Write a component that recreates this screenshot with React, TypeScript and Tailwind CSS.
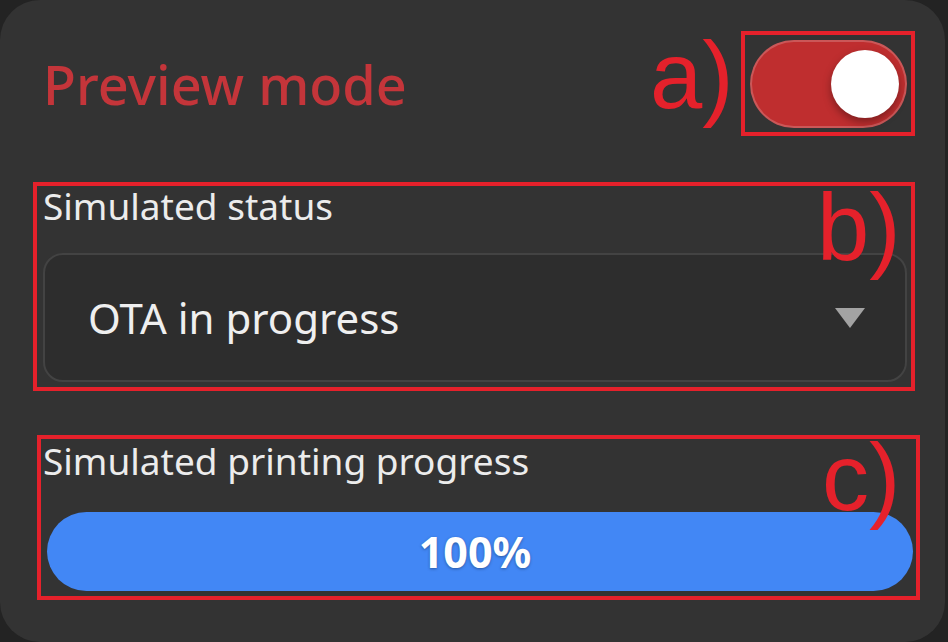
import React from 'react'

const annot = "absolute text-[94px] leading-none text-[#e5212b] font-['Liberation_Sans',Arial,sans-serif]"
const frame = 'absolute border-[4px] border-[#e5212b]'

export default function App() {
  return (
    <div className="w-[948px] h-[642px] bg-[#232323] font-['Noto_Sans',sans-serif]">
      <div className="relative mr-[3px] h-full rounded-[40px] bg-[#333333] pl-[43px] pr-[38px] pt-[40px]">
        {/* header */}
        <div className="flex items-center justify-between">
          <h1 className="text-[54px] leading-none font-medium text-[#c4353a]">Preview mode</h1>
          <div className="flex h-[88px] w-[157px] items-center justify-end rounded-full border-2 border-white/20 bg-[#bf2e2f] pr-[6px]">
            <div className="h-[68px] w-[68px] rounded-full bg-white shadow-[0_4px_8px_rgba(0,0,0,0.35)]" />
          </div>
        </div>

        {/* simulated status */}
        <div className="mt-[59px] text-[37px] leading-none text-[#ececec]">Simulated status</div>
        <div className="mt-[29px] flex h-[129px] items-center justify-between rounded-[20px] border-2 border-[#434343] bg-[#2d2d2d] pl-[43px] pr-[40px]">
          <span className="text-[42px] leading-none text-[#efefef]">OTA in progress</span>
          <svg width="30" height="20" viewBox="0 0 30 20">
            <polygon points="0,0 30,0 15,20" fill="#a3a3a3" />
          </svg>
        </div>

        {/* printing progress */}
        <div className="mt-[60px] text-[37px] leading-none text-[#ececec]">Simulated printing progress</div>
        <div className="ml-[4px] -mr-[6px] mt-[33px] flex h-[79px] items-center justify-center rounded-full bg-[#4287f5] pr-[10px]">
          <span className="text-[43px] leading-none font-bold text-white [text-shadow:0_1px_3px_rgba(0,0,0,0.35)]">100%</span>
        </div>

        {/* annotation overlays */}
        <div className={frame + ' left-[741px] top-[31px] h-[105px] w-[174px]'} />
        <div className={frame + ' left-[33px] top-[182px] h-[209px] w-[882px]'} />
        <div className={frame + ' left-[37px] top-[435px] h-[165px] w-[883px]'} />
        <div className={annot + ' left-[650px] top-[29px]'}>a)</div>
        <div className={annot + ' left-[817px] top-[181px]'}>b)</div>
        <div className={annot + ' left-[822px] top-[431px]'}>c)</div>
      </div>
    </div>
  )
}
